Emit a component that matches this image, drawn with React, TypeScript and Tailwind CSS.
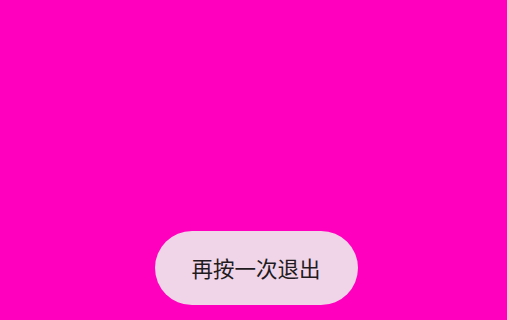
export default function App() {
  return (
    <div className="h-[320px] w-full bg-[#ff00bf] flex flex-col justify-end items-center pb-[15px]">
      <div className="ml-[5px] h-[74px] w-[203px] rounded-full bg-[#efd5e7] flex items-center justify-center text-[21.5px] text-[#1f1b1e] font-['Noto_Sans_CJK_SC','Noto_Sans',sans-serif]">
        再按一次退出
      </div>
    </div>
  );
}
